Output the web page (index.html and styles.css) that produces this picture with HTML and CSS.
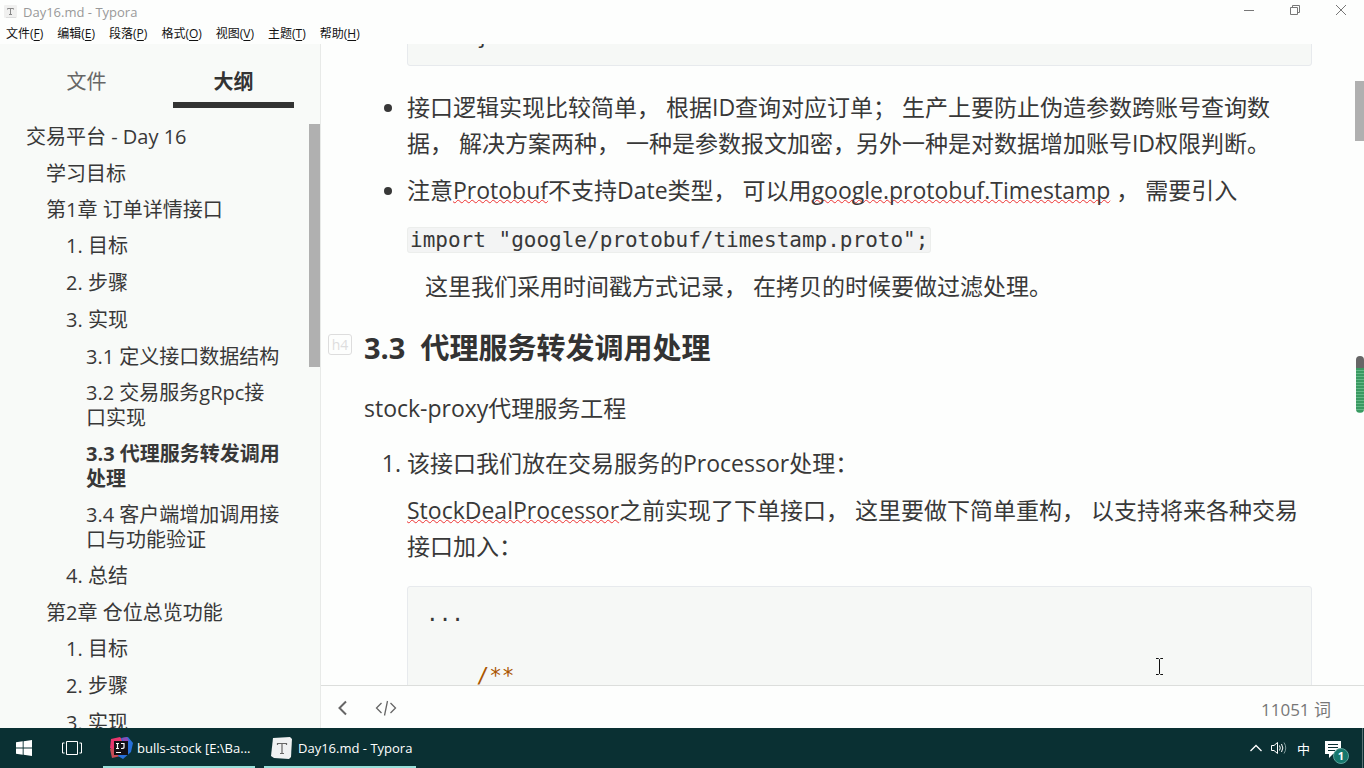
FILE: index.html
```html
<!DOCTYPE html>
<html lang="zh-CN">
<head>
<meta charset="utf-8">
<title>Day16.md - Typora</title>
<link rel="stylesheet" href="styles.css">
</head>
<body>
<div class="desktop">
  <header class="titlebar">
    <svg class="app-icon" viewBox="0 0 14 14" aria-hidden="true"><rect x="0" y="0" width="13" height="13" rx="1" fill="#f0f0ef"/><path d="M3.500 4.500V3.500H9.500V4.500M6.500 3.500V9.500M5 9.500H8" fill="none" stroke="#888"/><path d="M2 12.500H12" stroke="#ddd"/></svg>
    <span class="title">Day16.md - Typora</span>
    <div class="window-buttons">
      <button type="button" aria-label="最小化"><svg viewBox="0 0 12 12"><path d="M1 6.500H11"/></svg></button>
      <button type="button" aria-label="还原"><svg viewBox="0 0 12 12"><path d="M1.500 3.500H8.500V10.500H1.500ZM3.500 3.500V1.500H10.500V8.500H8.500"/></svg></button>
      <button type="button" aria-label="关闭"><svg viewBox="0 0 12 12"><path d="M1 1L11 11M11 1L1 11"/></svg></button>
    </div>
  </header>
  <nav class="menubar">
    <button type="button">文件(<u>F</u>)</button>
    <button type="button">编辑(<u>E</u>)</button>
    <button type="button">段落(<u>P</u>)</button>
    <button type="button">格式(<u>O</u>)</button>
    <button type="button">视图(<u>V</u>)</button>
    <button type="button">主题(<u>T</u>)</button>
    <button type="button">帮助(<u>H</u>)</button>
  </nav>

  <div class="workspace">
    <aside class="sidebar">
      <div class="tabs">
        <button type="button" class="tab">文件</button>
        <button type="button" class="tab active">大纲</button>
      </div>
      <div class="outline-view">
        <ul class="outline">
          <li class="lv1"><a href="#">交易平台 - Day 16</a></li>
          <li class="lv2"><a href="#">学习目标</a></li>
          <li class="lv2"><a href="#">第1章 订单详情接口</a></li>
          <li class="lv3"><a href="#">1. 目标</a></li>
          <li class="lv3"><a href="#">2. 步骤</a></li>
          <li class="lv3"><a href="#">3. 实现</a></li>
          <li class="lv4"><a href="#">3.1 定义接口数据结构</a></li>
          <li class="lv4"><a href="#">3.2 交易服务gRpc接口实现</a></li>
          <li class="lv4 current"><a href="#">3.3 代理服务转发调用处理</a></li>
          <li class="lv4"><a href="#">3.4 客户端增加调用接口与功能验证</a></li>
          <li class="lv3"><a href="#">4. 总结</a></li>
          <li class="lv2"><a href="#">第2章 仓位总览功能</a></li>
          <li class="lv3"><a href="#">1. 目标</a></li>
          <li class="lv3"><a href="#">2. 步骤</a></li>
          <li class="lv3"><a href="#">3. 实现</a></li>
        </ul>
        <div class="side-thumb"></div>
      </div>
    </aside>

    <main class="editor">
      <article class="page">
        <div class="nest">
          <pre class="fence tail">    }</pre>
        </div>
        <ul class="bullets">
          <li><p>接口逻辑实现比较简单， 根据ID查询对应订单； 生产上要防止伪造参数跨账号查询数据， 解决方案两种， 一种是参数报文加密，另外一种是对数据增加账号ID权限判断。</p></li>
          <li>
            <p>注意<span class="typo">Protobuf</span>不支持Date类型， 可以用<span class="typo">google.protobuf.Timestamp</span> ， 需要引入</p>
            <p><code>import "google/protobuf/timestamp.proto";</code></p>
            <p>&nbsp;&nbsp;&nbsp;这里我们采用时间戳方式记录， 在拷贝的时候要做过滤处理。</p>
          </li>
        </ul>
        <h4><span class="level">h4</span>3.3&nbsp; 代理服务转发调用处理</h4>
        <p class="lead">stock-proxy代理服务工程</p>
        <ol class="steps">
          <li>
            <p>该接口我们放在交易服务的Processor处理：</p>
            <p><span class="typo">StockDealProcessor</span>之前实现了下单接口， 这里要做下简单重构， 以支持将来各种交易接口加入：</p>
            <pre class="fence">...

    <span class="comment">/**</span>
</pre>
          </li>
        </ol>
      </article>
      <footer class="statusbar">
        <button type="button" aria-label="侧边栏"><svg viewBox="0 0 22 22"><path d="M14 4.500L7.500 11L14 17.500" stroke-width="2"/></svg></button>
        <button type="button" aria-label="源代码模式"><svg viewBox="0 0 22 22"><path d="M6.500 6L1.500 11L6.500 16M15.500 6L20.500 11L15.500 16M12.500 4L9.500 18.500" stroke-width="1.300"/></svg></button>
        <span class="count">11051 词</span>
      </footer>
      <div class="main-thumb"></div>
      <div class="meter"></div>
      <svg class="ibeam" viewBox="0 0 9 17" aria-hidden="true"><path d="M1 .500H3.500L4.500 1.500L5.500 .500H8M4.500 1.500V15.500M1 16.500H3.500L4.500 15.500L5.500 16.500H8" fill="none" stroke="#111"/></svg>
    </main>
  </div>

  <footer class="taskbar">
    <button type="button" class="sys" aria-label="开始"><svg width="16" height="16" viewBox="0 0 16 16" fill="#fff"><path d="M0 2.300L6.700 1.300V7.500H0ZM7.600 1.200L16 0V7.500H7.600ZM0 8.400H6.700V14.700L0 13.700ZM7.600 8.400H16V16L7.600 14.800Z"/></svg></button>
    <button type="button" class="sys" aria-label="任务视图"><svg width="20" height="14" viewBox="0 0 20 14" fill="none" stroke="#fff"><path d="M4.500 .500H15.500V13.500H4.500ZM2.500 2H.500V12H2.500M17.500 2H19.500V12H17.500"/></svg></button>
    <button type="button" class="task">
      <svg width="24" height="24" viewBox="0 0 24 24" aria-hidden="true"><path d="M2 3L11 1L16 7L8 19L5 15L1 12Z" fill="#e8366d"/><path d="M1 13L7 12L12 20L3 22Z" fill="#c64b55"/><path d="M12 2L19 1L24 7L22 16L14 23L9 20L14 8Z" fill="#2870d8"/><path d="M13 2L18 1L20 5L15 7Z" fill="#8b4bb5"/><rect x="5" y="5" width="14" height="14" fill="#120f14"/><path d="M7 7.500H10M8.500 7.500V12.500M7 12.500H10M12 7.500H15V11.500Q15 12.500 12 12.500M7 16.500H12" fill="none" stroke="#fff" stroke-width="1.200"/></svg>
      <span>bulls-stock [E:\Ba...</span>
    </button>
    <button type="button" class="task">
      <svg width="24" height="24" viewBox="0 0 24 24" aria-hidden="true"><path d="M3 2L20 1L22 3L21 21L19 23L4 22L1 20Z" fill="#eff1f2"/><path d="M7.500 9V7.500H16.500V9M12 7.500V17.500M10 17.500H14" fill="none" stroke="#666" stroke-width="1.200"/></svg>
      <span>Day16.md - Typora</span>
    </button>
    <div class="tray">
      <button type="button" aria-label="显示隐藏的图标"><svg width="12" height="8" viewBox="0 0 12 8" fill="none" stroke="#fff" stroke-width="1.300"><path d="M.500 7L6 1.500L11.500 7"/></svg></button>
      <button type="button" aria-label="音量"><svg width="17" height="14" viewBox="0 0 17 14" fill="none" stroke="#fff"><path d="M.500 4.500H3L6.500 1.500V12.500L3 9.500H.500ZM8.500 4.500Q10 7 8.500 9.500M10.500 3Q13.200 7 10.500 11"/><path d="M13 1.500Q16.500 7 13 12.500" stroke="#7f9a9b"/></svg></button>
      <button type="button" class="ime">中</button>
      <button type="button" class="notice" aria-label="通知"><svg width="17" height="17" viewBox="0 0 17 17"><path d="M0 0H16V13H8L4 17V13H0Z" fill="#fff"/><path d="M3 3.500H13M3 6.500H13M3 9.500H10" stroke="#0a3033"/></svg><span class="badge">1</span></button>
      <span class="peek"></span>
    </div>
  </footer>
</div>
</body>
</html>
```
FILE: styles.css
```css
* { box-sizing: border-box; }

body {
  margin: 0;
  color: #383838;
  background: #fdfefd;
  font-family: "Open Sans", "Noto Sans CJK SC", sans-serif;
}

button {
  margin: 0;
  padding: 0;
  border: 0;
  background: none;
  color: inherit;
  font: inherit;
}

button svg { display: block; }

.desktop {
  display: flex;
  flex-direction: column;
  height: 100vh;
  overflow: hidden;
}

/* window frame */
.titlebar {
  display: flex;
  flex: none;
  align-items: center;
  height: 24px;
  padding-left: 4px;
  color: #999;
  font-size: 13px;
}

.app-icon { width: 14px; height: 14px; margin-right: 5px; }

.window-buttons { display: flex; height: 20px; margin: 0 0 4px auto; }

.window-buttons button {
  display: grid;
  place-items: center;
  width: 46px;
}

.window-buttons svg {
  width: 12px;
  height: 12px;
  fill: none;
  stroke: #777;
}

.menubar {
  display: flex;
  flex: none;
  gap: 14px;
  height: 20px;
  padding-left: 6px;
  color: #111;
  font-size: 12px;
  line-height: 20px;
}

.menubar u { text-underline-offset: 2px; }

.workspace { display: flex; flex: 1; min-height: 0; }

/* sidebar */
.sidebar {
  display: flex;
  flex: none;
  flex-direction: column;
  width: 321px;
  border-right: 1px solid #e8eae8;
  background: #f8faf8;
  font-size: 20px;
}

.tabs {
  display: grid;
  flex: none;
  grid-template-columns: 1fr 1fr;
  gap: 26px;
  height: 64px;
  padding: 0 26px;
}

.tab {
  padding-top: 14px;
  border-bottom: 6px solid transparent;
  color: #666;
}

.tab.active {
  border-color: #333;
  color: #333;
  font-weight: 700;
}

.outline-view { position: relative; flex: 1; overflow: hidden; }

.outline {
  margin: 0;
  padding: 16px 37px 0 0;
  line-height: 25px;
  list-style: none;
}

.outline a { color: inherit; text-decoration: none; }
.outline li { padding-bottom: 11px; }
.outline .lv1 { padding-left: 26px; padding-bottom: 12px; }
.outline .lv2 { padding-left: 46px; }
.outline .lv3 { padding-left: 66px; padding-bottom: 12px; }
.outline .lv4 { padding-left: 86px; }
.outline .current { font-weight: 700; }

.side-thumb {
  position: absolute;
  top: 16px;
  right: 0;
  width: 11px;
  height: 243px;
  background: #b0b0b0;
}

/* document */
.editor {
  position: relative;
  display: flex;
  flex: 1;
  flex-direction: column;
  min-width: 0;
}

.page {
  flex: 1;
  min-height: 0;
  padding: 0 52px 0 43px;
  overflow: hidden;
  font-size: 23px;
  line-height: 36px;
}

.page p { margin: 0 0 11px; }
.page .bullets li + li p { margin-bottom: 12px; }

.nest, .bullets, .steps { padding-left: 43px; }
.bullets, .steps { margin: 0; }
.bullets { margin-top: 23px; }

.page h4 {
  position: relative;
  margin: 24px 0 22px;
  color: #333;
  font-size: 29px;
  line-height: 40px;
}

.level {
  position: absolute;
  top: 6px;
  left: -36px;
  width: 24px;
  border: 1px solid #ddd;
  border-radius: 3px;
  color: #ddd;
  font-size: 14px;
  font-weight: 400;
  line-height: 19px;
  text-align: center;
}

.page .lead { margin-bottom: 19px; }

.typo {
  text-decoration: underline wavy #e33 1px;
  text-decoration-skip-ink: none;
  text-underline-offset: 0;
}

code, .fence { font-family: "DejaVu Sans Mono", "Noto Sans CJK SC", monospace; }

code {
  padding: 0 2px;
  border: 1px solid #eceeec;
  border-radius: 3px;
  background: #f3f4f4;
  font-size: 21px;
  line-height: 22px;
}

.fence {
  margin: 22px 0 0;
  padding: 12px 18px;
  border: 1px solid #e7eaed;
  border-radius: 3px;
  background: #f6f8f6;
  font-size: 21px;
  line-height: 31px;
}

.fence.tail { margin-top: -35px; }

.comment { color: #a50; }

.statusbar {
  display: flex;
  flex: none;
  gap: 21px;
  align-items: center;
  height: 43px;
  padding: 2px 33px 0 11px;
  border-top: 1px solid #dcdedc;
  background: #fdfefd;
  color: #777;
  font-size: 17px;
}

.statusbar svg { width: 22px; height: 22px; fill: none; stroke: #666; }

.count { margin-left: auto; }

.main-thumb {
  position: absolute;
  top: 37px;
  right: 0;
  width: 9px;
  height: 60px;
  background: #b0b0b0;
}

.meter {
  position: absolute;
  top: 312px;
  right: 0;
  width: 8px;
  height: 57px;
  border-radius: 4px;
  background:
    linear-gradient(#666 12px, transparent 12px),
    repeating-linear-gradient(#3a9a62 0 2px, #62b886 2px 3px);
}

.ibeam {
  position: absolute;
  top: 614px;
  right: 200px;
  width: 9px;
  height: 17px;
}

/* taskbar */
.taskbar {
  display: flex;
  flex: none;
  height: 40px;
  background: #0a3033;
  color: #fff;
  font-size: 13px;
}

.sys { display: grid; place-items: center; width: 48px; }

.task {
  display: flex;
  gap: 4px;
  align-items: center;
  width: 152px;
  margin-left: 7px;
  padding: 2px 0 0 6px;
  border-bottom: 2px solid #98dfd9;
  white-space: nowrap;
}

.task + .task { margin-left: 9px; }

.tray { display: flex; gap: 9px; align-items: center; margin-left: auto; }

.ime { font-size: 13px; }

.notice { position: relative; margin: 2px 11px 0 6px; }

.badge {
  position: absolute;
  top: 7px;
  left: 8px;
  width: 16px;
  height: 16px;
  border: 1px solid #5ba19a;
  border-radius: 50%;
  background: #15776c;
  font-size: 11px;
  font-weight: 700;
  line-height: 14px;
  text-align: center;
}

.peek { align-self: stretch; width: 2px; border-left: 1px solid #5a7476; }
```
